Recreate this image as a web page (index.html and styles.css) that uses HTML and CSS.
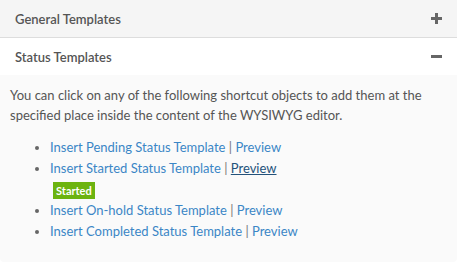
FILE: index.html
```html
<!DOCTYPE html>
<html>
<head>
<meta charset="utf-8">
<link rel="stylesheet" href="styles.css">
</head>
<body>
<div class="panel">
  <div class="head head-closed">
    <span class="title">General Templates</span>
    <span class="icon plus"></span>
  </div>
  <div class="head head-open">
    <span class="title">Status Templates</span>
    <span class="icon minus"></span>
  </div>
  <div class="body">
    <p class="intro">You can click on any of the following shortcut objects to add them at the specified place inside the content of the WYSIWYG editor.</p>
    <ul class="list">
      <li><a class="link">Insert Pending Status Template</a> <span class="sep">|</span> <a class="link">Preview</a></li>
      <li><a class="link">Insert Started Status Template</a> <span class="sep">|</span> <a class="link active">Preview</a>
        <div class="badge-row"><span class="badge">Started</span></div>
      </li>
      <li><a class="link">Insert On-hold Status Template</a> <span class="sep">|</span> <a class="link">Preview</a></li>
      <li><a class="link">Insert Completed Status Template</a> <span class="sep">|</span> <a class="link">Preview</a></li>
    </ul>
  </div>
</div>
</body>
</html>
```

FILE: styles.css
```css
html, body {
  margin: 0;
  padding: 0;
  background: #ffffff;
}
body {
  font-family: Lato, "Open Sans", sans-serif;
  font-size: 13px;
  color: #555;
}
.panel {
  width: 457px;
}
.head {
  height: 37px;
  display: flex;
  align-items: center;
  justify-content: space-between;
  padding: 0 15px 0 15px;
  box-sizing: border-box;
}
.head-closed {
  background: #f5f5f5;
  border-bottom: 1px solid #dddddd;
  height: 38px;
}
.head-open {
  background: #ffffff;
}
.title {
  font-weight: 600;
  font-size: 13px;
  color: #555;
}
.icon {
  position: relative;
  width: 11px;
  height: 11px;
}
.icon::before, .plus::after {
  content: "";
  position: absolute;
  background: #666;
}
.icon::before {
  left: 0;
  top: 4px;
  width: 11px;
  height: 3px;
}
.plus::after {
  left: 4px;
  top: 0;
  width: 3px;
  height: 11px;
}
.body {
  background: #fafafa;
  border-radius: 0 0 4px 4px;
  padding: 10px 10px 18px 10px;
  height: 187px;
  box-sizing: border-box;
}
.intro {
  margin: 0;
  line-height: 20px;
  color: #555;
}
.list {
  margin: 12px 0 0 0;
  padding-left: 40px;
  line-height: 21px;
}
.list li::marker {
  color: #666;
}
.link {
  color: #3b86c6;
  text-decoration: none;
  cursor: pointer;
}
.link.active {
  color: #24527a;
  text-decoration: underline;
}
.sep {
  color: #777;
}
.badge-row {
  height: 21px;
  padding-top: 3px;
  box-sizing: border-box;
}
.badge {
  display: block;
  width: max-content;
  margin-left: 3px;
  background: #6cb30f;
  color: #fff;
  font-weight: 700;
  font-size: 11px;
  line-height: 17px;
  padding: 0 3px;
}
```
